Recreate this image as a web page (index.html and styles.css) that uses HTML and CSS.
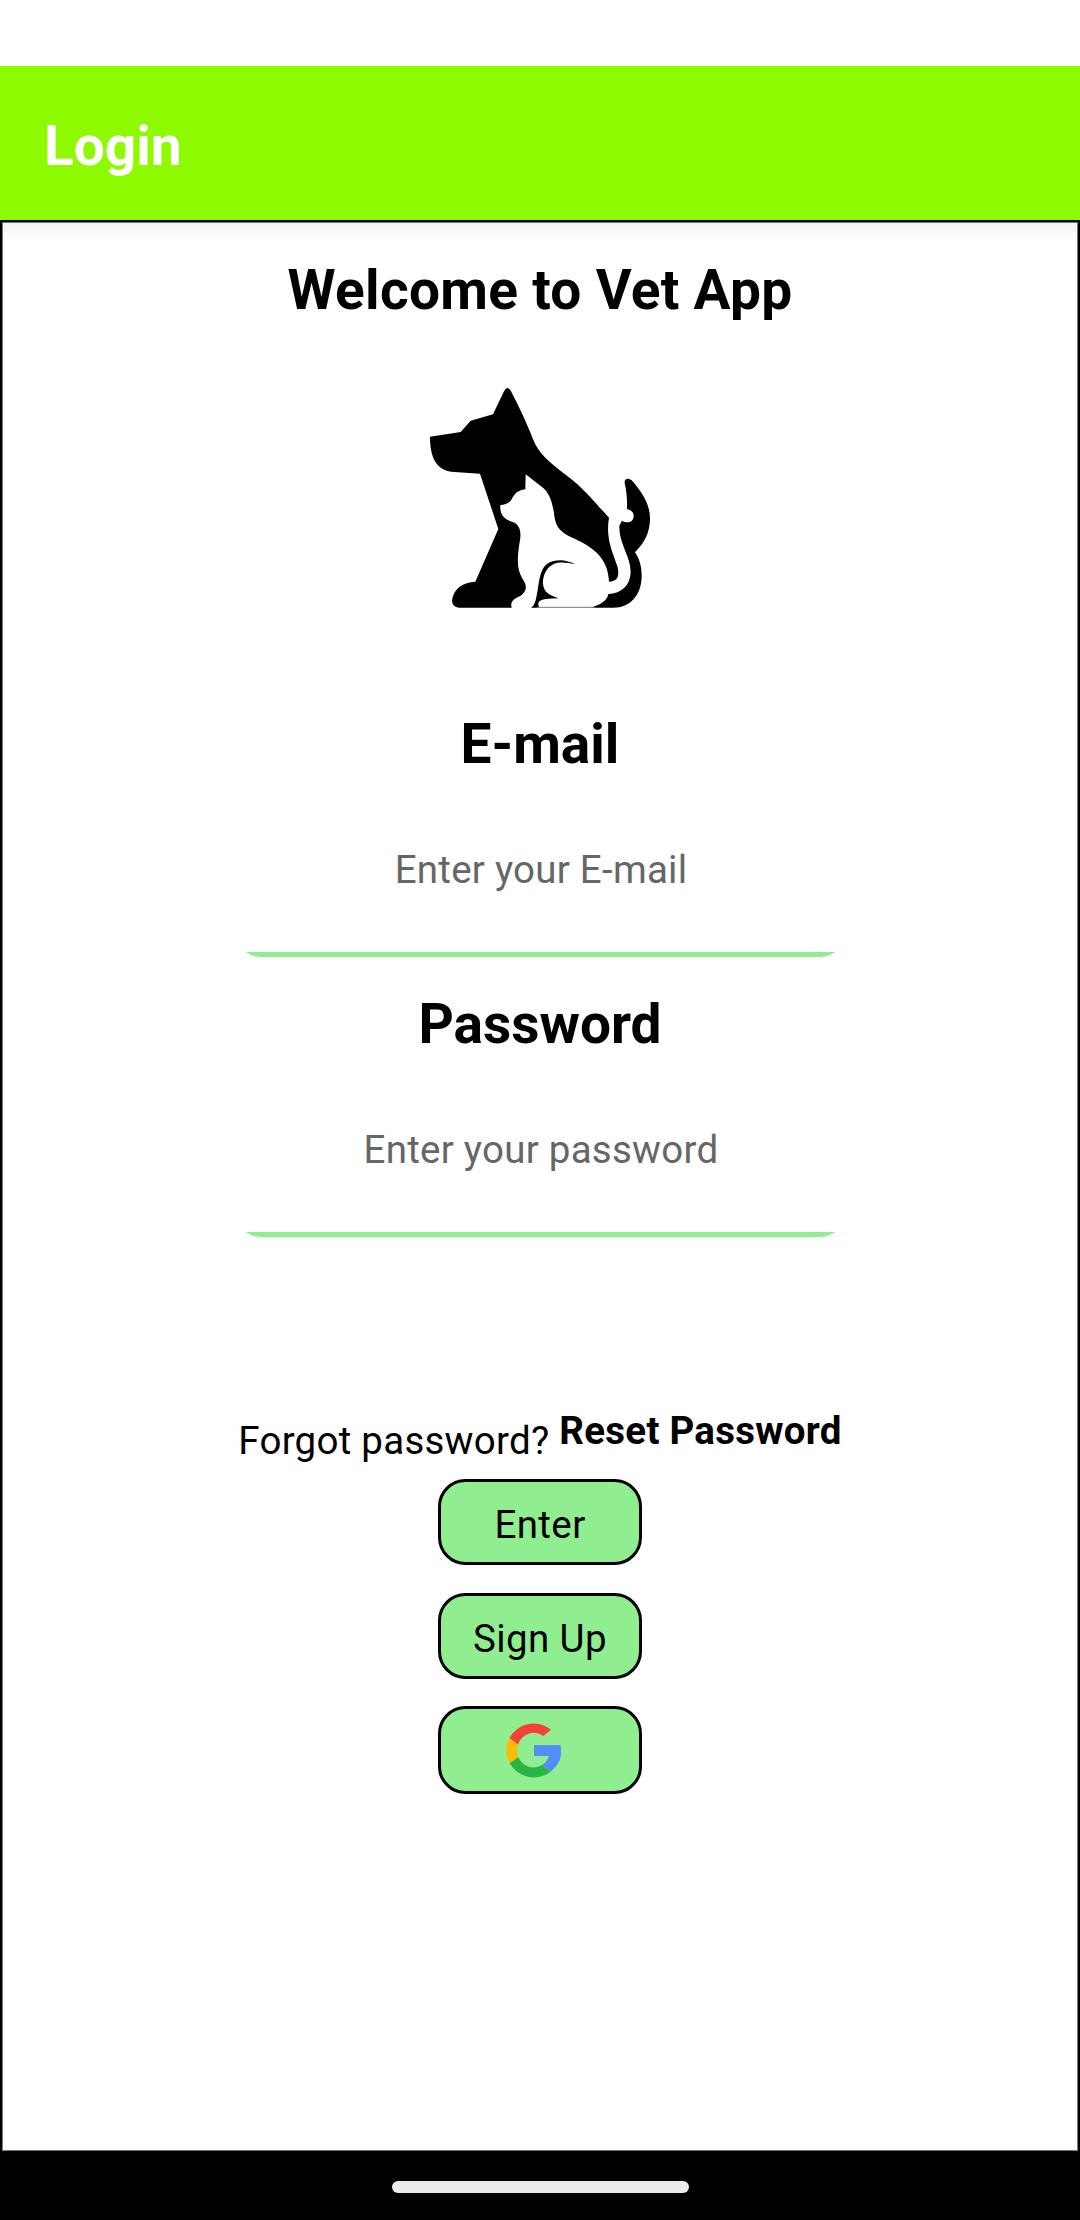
FILE: index.html
```html
<!DOCTYPE html>
<html lang="en">
<head>
<meta charset="utf-8">
<title>Login</title>
<link rel="stylesheet" href="styles.css">
</head>
<body>
<div class="status-bar"></div>
<header class="app-bar"><h1 class="title">Login</h1></header>
<main class="screen">
  <h2 class="title welcome">Welcome to Vet App</h2>
  <svg class="logo" viewBox="0 0 720 720" aria-hidden="true">
    <path fill="#000" d="M30 170L122 156L152 122L219 103L252 34Q262 14 273 34C298 82 319 126 339 178C358 224 388 246 431 280C493 326 510 352 567 413C556 477 579 518 592 559C600 590 591 605 567 605C564 537 525 504 459 474C414 454 406 435 402 400C396 360 385 335 366 321L317 283L316 328C289 332 282 344 275 358C267 372 255 374 241 375C239 402 251 418 276 425C300 432 304 456 300 480C288 548 294 572 308 597C321 616 322 633 302 647C280 656 270 666 275 683H119C103 683 96 673 96 661C101 624 130 607 166 605L235 447L180 281L103 276C55 274 30 241 30 170Z"/>
    <path fill="#000" d="M614 309C612 296 625 292 635 301C668 338 691 377 690 417C689 460 674 487 645 517C660 539 665 563 665 587C665 647 628 683 581 683H512C541 675 562 662 565 642C605 640 631 616 632 576C632 529 596 491 598 437L606 422C614 428 631 430 638 419C646 405 638 390 621 388C622 361 620 333 614 309Z"/>
    <path fill="#000" d="M333 683C347 675 348 655 353 631C361 583 363 541 420 541Q445 542 465 553C430 544 401 544 384 565C362 592 365 630 386 642Q398 649 415 655C389 657 361 654 355 669Q353 677 358 683Z"/>
    <path stroke="#777" stroke-width="3" d="M350 682H525"/>
  </svg>
  <form class="login-form">
    <label class="title" for="email">E-mail</label>
    <input class="field" id="email" type="text" placeholder="Enter your E-mail">
    <label class="title" for="password">Password</label>
    <input class="field" id="password" type="password" placeholder="Enter your password">
    <p class="reset-row"><span>Forgot password?</span><a class="reset-link">Reset Password</a></p>
    <div class="actions">
      <button class="button" type="button">Enter</button>
      <button class="button" type="button">Sign Up</button>
      <button class="button button-google" type="button" aria-label="Google">
        <svg class="google" viewBox="0 0 165 165">
          <path fill="#f44336" d="M10 45A83 83 0 0 1 135 20L112 39A49 49 0 0 0 36 65Z"/>
          <path fill="#fbbc05" d="M10 45L36 65Q30 84 37 103L11 121Q-9 83 10 45Z"/>
          <path fill="#28b446" d="M11 121L37 103A49 49 0 0 0 108 126L133 147A83 83 0 0 1 11 121Z"/>
          <path fill="#518ef8" d="M84 66H163Q175 114 133 147L108 126Q123 117 129 99H84Z"/>
        </svg>
      </button>
    </div>
  </form>
</main>
<footer class="nav-bar"><div class="home-handle"></div></footer>
</body>
</html>
```
FILE: styles.css
```css
* { box-sizing: border-box; }

body {
  display: flex;
  flex-direction: column;
  height: 2220px;
  margin: 0;
  background: #fff;
  color: #000;
  font: 38.5px/45px Roboto, sans-serif;
  letter-spacing: 0.25px;
}

.status-bar { height: 66px; }

.app-bar {
  height: 154px;
  padding: 48px 44px 0;
  background: #8efa00;
  color: #fff;
}

.title {
  margin: 0;
  font-size: 55px;
  font-weight: 700;
  letter-spacing: 0;
  line-height: 64px;
}

.welcome { letter-spacing: 0.3px; }

.screen {
  display: flex;
  flex: 1;
  flex-direction: column;
  align-items: center;
  padding-top: 36px;
  border: 2px solid #000;
  border-bottom: 0;
  background: linear-gradient(#f2f2f2, #fff 18px);
  box-shadow: inset 0 0 0 1px #777;
}

.logo {
  width: 240px;
  height: 240px;
  margin-top: 58px;
}

.login-form {
  display: flex;
  flex-direction: column;
  align-items: center;
  margin-top: 92px;
}

.field {
  width: 613px;
  height: 181px;
  margin-bottom: 35px;
  padding: 6px 0 0 2px;
  border: 0;
  border-radius: 27.5px;
  background: linear-gradient(#90ee90, #90ee90) bottom / 100% 5.5px no-repeat;
  color: #000;
  font: inherit;
  letter-spacing: inherit;
  text-align: center;
}

.field::placeholder { color: #666; opacity: 1; }

.reset-row {
  display: flex;
  gap: 10px;
  margin: 136px 0 0;
}

.reset-row span { padding-top: 10px; }

.reset-link { font-weight: 700; }

.actions {
  display: flex;
  flex-direction: column;
  gap: 28px;
  margin-top: 16px;
}

.button {
  display: flex;
  align-items: center;
  justify-content: center;
  width: 204px;
  height: 86px;
  padding: 4px 0 0;
  border: 3px solid #000;
  border-radius: 27.5px;
  background: #90ee90;
  color: #000;
  font: inherit;
  letter-spacing: 0.4px;
}

.button-google {
  height: 88px;
  margin-top: -1px;
  padding: 0 13px 0 0;
}

.google { width: 55px; height: 55px; }

.nav-bar {
  height: 69px;
  padding-top: 30px;
  background: #000;
}

.home-handle {
  width: 297px;
  height: 12px;
  margin: 0 auto;
  border-radius: 6px;
  background: #ebebeb;
}
```
